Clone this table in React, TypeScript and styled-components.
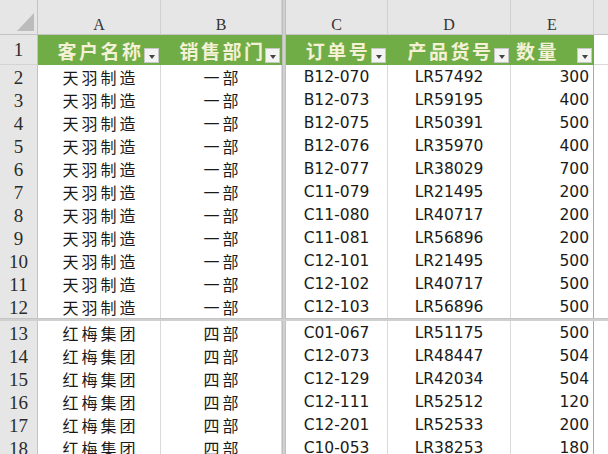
import React from "react";
import styled, { createGlobalStyle } from "styled-components";

const GlobalStyle = createGlobalStyle`
  html, body { margin: 0; padding: 0; background: #ffffff; }
  body { width: 608px; height: 454px; overflow: hidden; }
`;

const COLS = "38px 123px 121px 4px 102px 123px 83px 1fr";
const GREEN = "#70AD47";
const ROW_LINE = "#93bd6f";
const GRID_GRAY = "#d9d9d9";

const Sheet = styled.div`
  display: flex;
  flex-direction: column;
  width: 608px;
  height: 454px;
  overflow: hidden;
  background: #fff;
`;

const Row = styled.div<{ $h: number }>`
  display: grid;
  grid-template-columns: ${COLS};
  height: ${(p) => p.$h}px;
  flex: none;
`;

const Corner = styled.div`
  position: relative;
  background: #e6e6e6;
  border-right: 1px solid #c4c4c4;
  border-bottom: 1px solid #c4c4c4;
  box-sizing: border-box;
  overflow: hidden;
  &::after {
    content: "";
    position: absolute;
    right: 3px;
    bottom: 3px;
    width: 0;
    height: 0;
    border-left: 17px solid transparent;
    border-bottom: 18px solid #bcbcbc;
  }
`;

const ColHead = styled.div<{ $last?: boolean }>`
  background: #e6e6e6;
  border-right: ${(p) => (p.$last ? "none" : "1px solid #d0d0d0")};
  border-bottom: 1px solid #c4c4c4;
  box-sizing: border-box;
  display: flex;
  justify-content: center;
  align-items: center;
  padding-top: 16px;
  font-family: "Liberation Serif", serif;
  font-size: 16px;
  color: #333;
`;

const RowHead = styled.div`
  background: #e6e6e6;
  border-right: 1px solid #c4c4c4;
  border-bottom: 1px solid #d4d4d4;
  box-sizing: border-box;
  display: flex;
  justify-content: center;
  align-items: center;
  font-family: "Liberation Serif", serif;
  font-size: 19px;
  color: #2b2b2b;
  padding-top: 1px;
`;

const FreezeV = styled.div`
  background: #d0d0d0;
  border-left: 1px solid #c0c0c0;
  border-right: 1px solid #c0c0c0;
  box-sizing: border-box;
`;

const FreezeH = styled.div`
  height: 3px;
  flex: none;
  background: #d0d0d0;
  border-top: 1px solid #c4c4c4;
  box-sizing: border-box;
`;

const HeadCell = styled.div<{ $align?: "left" | "center" }>`
  position: relative;
  background: ${GREEN};
  box-sizing: border-box;
  display: flex;
  align-items: center;
  justify-content: ${(p) => (p.$align === "left" ? "flex-start" : "center")};
  padding-left: ${(p) => (p.$align === "left" ? "5px" : "2px")};
  font-family: "Noto Sans CJK SC", sans-serif;
  font-weight: 700;
  font-size: 19px;
  letter-spacing: 2.5px;
  color: #f4f1d6;
`;

const FilterButton = styled.span`
  position: absolute;
  right: 2px;
  bottom: 2px;
  width: 15px;
  height: 15px;
  box-sizing: border-box;
  background: #f4f4f4;
  border: 1px solid #c8c8c8;
  display: flex;
  align-items: center;
  justify-content: center;
  &::before {
    content: "";
    width: 0;
    height: 0;
    margin-top: 2px;
    border-left: 3.5px solid transparent;
    border-right: 3.5px solid transparent;
    border-top: 4px solid #444;
  }
`;

const Cell = styled.div<{ $kind: "cn" | "code" | "num"; $edge?: boolean }>`
  box-sizing: border-box;
  background: #fff;
  border-bottom: 1px solid ${ROW_LINE};
  border-right: 1px solid ${(p) => (p.$edge ? ROW_LINE : GRID_GRAY)};
  display: flex;
  align-items: center;
  justify-content: ${(p) => (p.$kind === "num" ? "flex-end" : "center")};
  padding-right: ${(p) => (p.$kind === "num" ? "4px" : "0")};
  padding-left: ${(p) => (p.$kind === "cn" ? "3px" : "0")};
  font-family: ${(p) =>
    p.$kind === "cn"
      ? `"Noto Sans CJK SC", sans-serif`
      : `"DejaVu Sans", sans-serif`};
  font-size: ${(p) => (p.$kind === "cn" ? "16px" : "15.5px")};
  letter-spacing: ${(p) => (p.$kind === "cn" ? "3px" : "0")};
  color: #1a1a1a;
  white-space: nowrap;
`;

const Blank = styled.div<{ $header?: boolean }>`
  box-sizing: border-box;
  background: #fff;
  border-bottom: 1px solid ${GRID_GRAY};
`;

type Rec = { n: number; name: string; dept: string; order: string; sku: string; qty: number };

const top: Rec[] = [
  ["B12-070", "LR57492", 300],
  ["B12-073", "LR59195", 400],
  ["B12-075", "LR50391", 500],
  ["B12-076", "LR35970", 400],
  ["B12-077", "LR38029", 700],
  ["C11-079", "LR21495", 200],
  ["C11-080", "LR40717", 200],
  ["C11-081", "LR56896", 200],
  ["C12-101", "LR21495", 500],
  ["C12-102", "LR40717", 500],
  ["C12-103", "LR56896", 500],
].map(([o, s, q], i) => ({
  n: i + 2,
  name: "天羽制造",
  dept: "一部",
  order: o as string,
  sku: s as string,
  qty: q as number,
}));

const bottom: Rec[] = [
  ["C01-067", "LR51175", 500],
  ["C12-073", "LR48447", 504],
  ["C12-129", "LR42034", 504],
  ["C12-111", "LR52512", 120],
  ["C12-201", "LR52533", 200],
  ["C10-053", "LR38253", 180],
].map(([o, s, q], i) => ({
  n: i + 13,
  name: "红梅集团",
  dept: "四部",
  order: o as string,
  sku: s as string,
  qty: q as number,
}));

const DataRow: React.FC<{ r: Rec }> = ({ r }) => (
  <Row $h={23}>
    <RowHead>{r.n}</RowHead>
    <Cell $kind="cn">{r.name}</Cell>
    <Cell $kind="cn">{r.dept}</Cell>
    <FreezeV />
    <Cell $kind="code">{r.order}</Cell>
    <Cell $kind="code">{r.sku}</Cell>
    <Cell $kind="num" $edge>
      {r.qty}
    </Cell>
    <Blank />
  </Row>
);

export default function App() {
  return (
    <>
      <GlobalStyle />
      <Sheet>
        <Row $h={35}>
          <Corner />
          <ColHead>A</ColHead>
          <ColHead>B</ColHead>
          <FreezeV />
          <ColHead>C</ColHead>
          <ColHead>D</ColHead>
          <ColHead>E</ColHead>
          <ColHead $last />
        </Row>
        <Row $h={30}>
          <RowHead>1</RowHead>
          <HeadCell>
            客户名称
            <FilterButton />
          </HeadCell>
          <HeadCell>
            销售部门
            <FilterButton />
          </HeadCell>
          <FreezeV />
          <HeadCell>
            订单号
            <FilterButton />
          </HeadCell>
          <HeadCell>
            产品货号
            <FilterButton />
          </HeadCell>
          <HeadCell $align="left">
            数量
            <FilterButton />
          </HeadCell>
          <Blank />
        </Row>
        {top.map((r) => (
          <DataRow key={r.n} r={r} />
        ))}
        <FreezeH />
        {bottom.map((r) => (
          <DataRow key={r.n} r={r} />
        ))}
      </Sheet>
    </>
  );
}
